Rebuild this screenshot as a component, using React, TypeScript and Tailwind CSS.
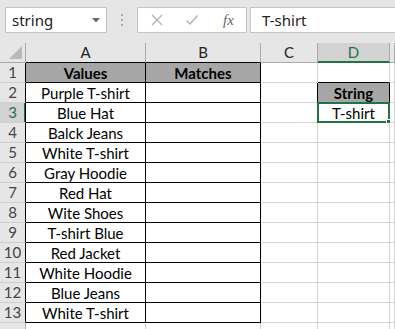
import React from "react";

const COLS = ["A", "B", "C", "D", "E"];
const WIDTHS = ["w-[120px]", "w-[115px]", "w-[57px]", "w-[72px]", "flex-1"];

const AVALS = [
  "Values",
  "Purple T-shirt",
  "Blue Hat",
  "Balck Jeans",
  "White T-shirt",
  "Gray Hoodie",
  "Red Hat",
  "Wite Shoes",
  "T-shirt Blue",
  "Red Jacket",
  "White Hoodie",
  "Blue Jeans",
  "White T-shirt",
];

function inBox(r: number, c: number) {
  if ((c === 1 || c === 2) && r >= 1 && r <= 13) return true;
  if (c === 4 && (r === 2 || r === 3)) return true;
  return false;
}

function cellText(r: number, c: number): string {
  if (c === 1 && r >= 1 && r <= 13) return AVALS[r - 1];
  if (c === 2 && r === 1) return "Matches";
  if (c === 4 && r === 2) return "String";
  if (c === 4 && r === 3) return "T-shirt";
  return "";
}

function isHeaderFill(r: number, c: number) {
  return (r === 1 && (c === 1 || c === 2)) || (r === 2 && c === 4);
}

const cellFont = { fontFamily: "Lato, 'Liberation Sans', sans-serif" };

export default function App() {
  const rows = Array.from({ length: 14 }, (_, i) => i + 1);
  return (
    <div className="w-[395px] h-[329px] overflow-hidden bg-white relative">
      {/* Formula bar */}
      <div className="h-[43px] bg-[#e6e6e6] flex items-start pt-[7px] pl-[5px]">
        <div className="w-[102px] h-[26px] bg-white border border-[#c6c6c6] flex items-center pl-[6px] pr-[6px] box-border">
          <span
            className="text-[15px] text-[#222] flex-1 leading-none"
            style={{ fontFamily: "'Noto Sans', 'Open Sans', sans-serif" }}
          >
            string
          </span>
          <svg width="8" height="5" viewBox="0 0 8 5" className="mt-[1px]">
            <polygon points="0,0 8,0 4,4.5" fill="#6b6b6b" />
          </svg>
        </div>
        <div className="w-[30px] h-[26px] flex flex-col items-center justify-center gap-[3px]">
          <div className="w-[2px] h-[2px] bg-[#a8a8a8]" />
          <div className="w-[2px] h-[2px] bg-[#a8a8a8]" />
          <div className="w-[2px] h-[2px] bg-[#a8a8a8]" />
        </div>
        <div className="w-[110px] h-[26px] bg-white border border-[#c6c6c6] box-border flex items-center">
          <svg width="14" height="14" viewBox="0 0 14 14" className="ml-[12px]">
            <path d="M2 2 L12 12 M12 2 L2 12" stroke="#b2b2b2" strokeWidth="1.3" fill="none" />
          </svg>
          <svg width="14" height="14" viewBox="0 0 14 14" className="ml-[21px]">
            <path d="M1.5 7.5 L5 11 L12.5 2.5" stroke="#b2b2b2" strokeWidth="1.5" fill="none" />
          </svg>
          <span
            className="ml-[24px] text-[15px] italic text-[#666] leading-none"
            style={{ fontFamily: "'Liberation Serif', serif" }}
          >
            fx
          </span>
        </div>
        <div className="ml-[3px] flex-1 h-[26px] bg-white border border-[#c6c6c6] border-r-0 box-border flex items-center pl-[11px]">
          <span
            className="text-[15px] text-[#222] leading-none"
            style={{ fontFamily: "'Noto Sans', 'Open Sans', sans-serif" }}
          >
            T-shirt
          </span>
        </div>
      </div>

      {/* Column header row */}
      <div className="flex h-[20px]" style={cellFont}>
        <div className="w-[26px] h-[20px] box-border border-r border-b border-[#ababab] bg-[#e6e6e6] flex items-end justify-end pr-[3px] pb-[3px]">
          <svg width="13" height="13" viewBox="0 0 13 13">
            <polygon points="13,0 13,13 0,13" fill="#b9b9b9" />
          </svg>
        </div>
        {COLS.map((col, i) => {
          const c = i + 1;
          const selected = col === "D";
          const bottomBlack = inBox(1, c);
          return (
            <div
              key={col}
              className={`${WIDTHS[i]} h-[20px] box-border border-r border-r-[#ababab] ${
                selected
                  ? "bg-[#d2d2d2] border-b-2 border-b-[#217346] text-[#217346]"
                  : bottomBlack
                  ? "bg-[#e6e6e6] border-b border-b-black text-[#222]"
                  : "bg-[#e6e6e6] border-b border-b-[#ababab] text-[#222]"
              } flex items-center justify-center text-[15px] leading-none`}
            >
              {col === "E" ? "" : col}
            </div>
          );
        })}
      </div>

      {/* Grid rows */}
      {rows.map((r) => (
        <div key={r} className="flex h-[20px]" style={cellFont}>
          <div
            className={`w-[26px] h-[20px] box-border border-r border-b border-b-[#d0d0d0] flex items-center justify-center text-[15px] leading-none ${
              inBox(r, 1) ? "border-r-black" : "border-r-[#ababab]"
            } ${
              r === 3
                ? "bg-[#d2d2d2] text-[#217346] shadow-[inset_-1px_0_0_#217346]"
                : "bg-[#e6e6e6] text-[#444]"
            }`}
          >
            {r <= 13 ? r : ""}
          </div>
          {COLS.map((col, i) => {
            const c = i + 1;
            const rb = inBox(r, c) || inBox(r, c + 1);
            const bb = inBox(r, c) || inBox(r + 1, c);
            const txt = cellText(r, c);
            const fill = isHeaderFill(r, c);
            const selected = r === 3 && col === "D";
            return (
              <div
                key={col}
                className={`${WIDTHS[i]} relative h-[20px] box-border border-r border-b ${
                  rb ? "border-r-black" : "border-r-[#d4d4d4]"
                } ${bb ? "border-b-black" : "border-b-[#d4d4d4]"} ${
                  fill ? "bg-[#a6a6a6] font-bold" : "bg-white"
                } flex items-center justify-center text-[15px] leading-none text-black whitespace-nowrap`}
              >
                <span className="pt-[1px]">{txt}</span>
                {selected && (
                  <div className="absolute -left-[1px] -top-[1px] w-[73px] h-[21px] border-2 border-[#217346] box-border pointer-events-none">
                    <div className="absolute -right-[4px] -bottom-[4px] w-[6px] h-[6px] bg-[#217346] border border-white box-border" />
                  </div>
                )}
              </div>
            );
          })}
        </div>
      ))}
    </div>
  );
}
